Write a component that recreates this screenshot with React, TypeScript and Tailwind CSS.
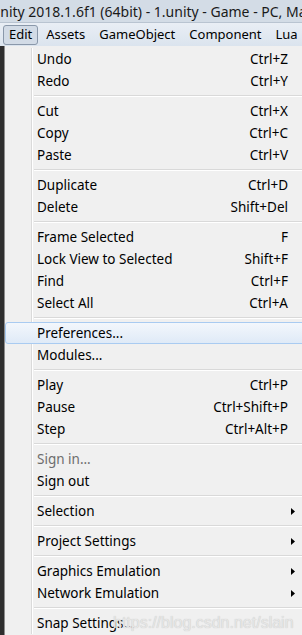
import React from "react"

type Item =
  | { sep: true }
  | { label: string; keys?: string; sub?: boolean; off?: boolean; hot?: boolean }

const items: Item[] = [
  { label: "Undo", keys: "Ctrl+Z" },
  { label: "Redo", keys: "Ctrl+Y" },
  { sep: true },
  { label: "Cut", keys: "Ctrl+X" },
  { label: "Copy", keys: "Ctrl+C" },
  { label: "Paste", keys: "Ctrl+V" },
  { sep: true },
  { label: "Duplicate", keys: "Ctrl+D" },
  { label: "Delete", keys: "Shift+Del" },
  { sep: true },
  { label: "Frame Selected", keys: "F" },
  { label: "Lock View to Selected", keys: "Shift+F" },
  { label: "Find", keys: "Ctrl+F" },
  { label: "Select All", keys: "Ctrl+A" },
  { sep: true },
  { label: "Preferences...", hot: true },
  { label: "Modules..." },
  { sep: true },
  { label: "Play", keys: "Ctrl+P" },
  { label: "Pause", keys: "Ctrl+Shift+P" },
  { label: "Step", keys: "Ctrl+Alt+P" },
  { sep: true },
  { label: "Sign in...", off: true },
  { label: "Sign out" },
  { sep: true },
  { label: "Selection", sub: true },
  { sep: true },
  { label: "Project Settings", sub: true },
  { sep: true },
  { label: "Graphics Emulation", sub: true },
  { label: "Network Emulation", sub: true },
  { sep: true },
  { label: "Snap Settings..." },
]

function Gutter() {
  return (
    <div className="flex h-full shrink-0">
      <div className="w-[27px] h-full border-r border-[#dadada]" />
      <div className="w-px h-full bg-white" />
    </div>
  )
}

function Arrow() {
  return (
    <svg width="4" height="7" viewBox="0 0 4 7" className="mr-[7px]">
      <path d="M0 0 L4 3.5 L0 7 Z" fill="#000" />
    </svg>
  )
}

export default function App() {
  return (
    <div
      className="relative w-[302px] h-[635px] overflow-hidden bg-[#f0f0f0] text-black"
      style={{ fontFamily: '"Noto Sans", "Noto Sans CJK SC", sans-serif' }}
    >
      {/* window title */}
      <div className="h-[22px] bg-[#d3dce6] flex items-center overflow-hidden whitespace-nowrap">
        <span className="-ml-[10px] text-[14px] text-[#1a1a1a]">
          Unity 2018.1.6f1 (64bit) - 1.unity - Game - PC, Mac
        </span>
      </div>
      <div className="h-px bg-[#b9c4d1]" />

      {/* menu bar */}
      <div className="h-[23px] bg-gradient-to-b from-[#e9eef5] to-[#dbe4ee] flex items-center text-[13px] whitespace-nowrap overflow-hidden">
        <div className="ml-[3px] h-[20px] px-[5px] flex items-center rounded-[3px] border border-[#8a98aa] bg-[#d2dbe6]">
          Edit
        </div>
        <span className="ml-[8px]">Assets</span>
        <span className="ml-[14px]">GameObject</span>
        <span className="ml-[14px]">Component</span>
        <span className="ml-[14px]">Lua</span>
      </div>

      {/* dropdown */}
      <div className="flex h-full">
        <div className="w-[4px] shrink-0 bg-[#2e2e2e]" />
        <div className="w-px shrink-0 bg-[#8c8c8c]" />
        <div className="flex-1 flex flex-col pt-[2px] text-[13.5px]">
          {items.map((it, i) => {
            if ("sep" in it) {
              return (
                <div key={i} className="h-[8px] flex">
                  <Gutter />
                  <div className="flex-1 flex flex-col justify-center ml-px">
                    <div className="h-px bg-[#d9d9d9]" />
                    <div className="h-px bg-white" />
                  </div>
                </div>
              )
            }
            if (it.hot) {
              return (
                <div
                  key={i}
                  className="h-[22px] flex items-center rounded-[3px] border border-[#a9cbf1] bg-gradient-to-b from-[#f3f7fc] to-[#dfeaf7] -mr-[4px]"
                >
                  <div className="w-[31px] shrink-0" />
                  <span>{it.label}</span>
                </div>
              )
            }
            return (
              <div key={i} className="h-[22px] flex items-center">
                <Gutter />
                <span className={`pl-[4px] flex-1 ${it.off ? "text-[#6d6d6d]" : ""}`}>{it.label}</span>
                {it.keys && <span className="pr-[14px]">{it.keys}</span>}
                {it.sub && <Arrow />}
              </div>
            )
          })}
        </div>
      </div>

      {/* watermark */}
      <div
        className="absolute left-[113px] top-[611px] text-[16px] text-[#e6e6e6] whitespace-nowrap"
        style={{ fontFamily: '"Liberation Sans", Arial, sans-serif', textShadow: "0 0 1px #bdbdbd" }}
      >
        https://blog.csdn.net/slain
      </div>
    </div>
  )
}
